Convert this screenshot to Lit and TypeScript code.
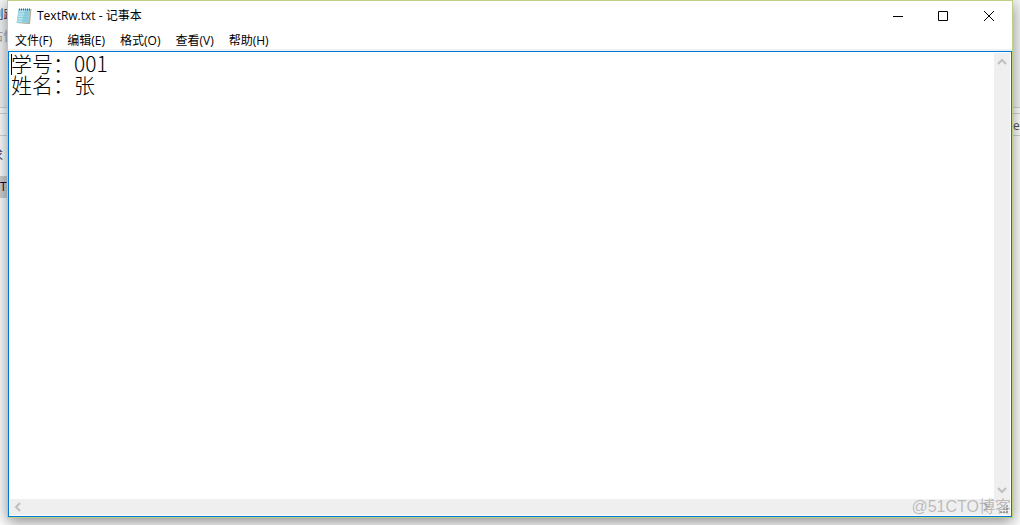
import { LitElement, html, css, svg } from "lit";
import { customElement, state } from "lit/decorators.js";

const chevrons: Record<string, string> = {
  up: "M2 8 6 4 10 8",
  down: "M2 4 6 8 10 4",
  left: "M8 2 4 6 8 10",
  right: "M4 2 8 6 4 10",
};

@customElement("scroll-bar")
class ScrollBar extends LitElement {
  static properties = { direction: {} };
  declare direction: string;

  static styles = css`
    :host { display: flex; background: #efefef; }
    .track { display: flex; flex: 1; justify-content: space-between; }
    .vertical { flex-direction: column; padding: 1px 0; }
    button {
      display: grid; place-items: center; width: 16px; height: 16px;
      padding: 0; border: 0; background: none;
    }
    svg { width: 12px; height: 12px; fill: none; stroke: #bfbfbf; stroke-width: 2; }
  `;

  private arrow(kind: string, label: string) {
    return html`<button type="button" aria-label=${label}>
      <svg viewBox="0 0 12 12">${svg`<path d=${chevrons[kind]}/>`}</svg>
    </button>`;
  }

  render() {
    return this.direction === "vertical"
      ? html`<div class="track vertical">${this.arrow("up", "向上滚动")}${this.arrow("down", "向下滚动")}</div>`
      : html`<div class="track">${this.arrow("left", "向左滚动")}${this.arrow("right", "向右滚动")}</div>`;
  }
}

@customElement("app-root")
class AppRoot extends LitElement {
  @state() private text = "学号：001\n姓名：张";

  private menus = ["文件(F)", "编辑(E)", "格式(O)", "查看(V)", "帮助(H)"];

  static styles = css`
    * { box-sizing: border-box; }
    :host {
      display: block;
      font: 12px/16px "Open Sans", "Noto Sans CJK SC", sans-serif;
      color: #000;
    }
    .desktop {
      position: relative;
      display: grid; grid-template-columns: 7px minmax(0, 1fr) 7px;
      height: 100vh; overflow: hidden; background: #fff;
    }
    .behind { display: flex; flex-direction: column; overflow: hidden; white-space: nowrap; }
    .ribbon { height: 108px; padding-top: 7px; background: #f3f5f7; border-bottom: 1px solid #d5d5d5; color: #335; }
    .ribbon div { height: 22px; display: flex; justify-content: center; }
    .ribbon .dim { color: #999; }
    .address { height: 23px; margin-top: 5px; padding-top: 4px; border: solid #d5d5d5; border-width: 1px 0; color: #555; }
    .row { height: 22px; padding-top: 3px; color: #446; }
    .heading { margin: 9px 0; display: flex; justify-content: flex-end; padding-right: 4px; }
    .selected { background: #d0d0d0; color: #204; }
    .window {
      position: relative; z-index: 1; display: flex; flex-direction: column;
      margin-bottom: 7px; border: 1px solid #bdd083; background: #fff;
      box-shadow: 0 4px 14px rgba(0, 0, 0, 0.45);
    }
    header { display: flex; align-items: center; height: 30px; padding-left: 8px; }
    .icon { width: 16px; height: 18px; margin-right: 5px; }
    h1 { flex: 1; margin: 0; font: inherit; }
    .control { display: grid; place-items: center; width: 46px; height: 30px; padding: 0; border: 0; background: none; }
    .control svg { width: 12px; height: 12px; fill: none; stroke: #000; }
    nav { display: flex; gap: 1px; height: 20px; border-bottom: 2px solid #f0f0f0; }
    nav button { padding: 2px 7px 0; border: 0; background: none; font: inherit; color: inherit; }
    .editor {
      position: relative; flex: 1; display: grid; min-height: 0;
      grid-template-columns: minmax(0, 1fr) 16px; grid-template-rows: minmax(0, 1fr) 16px;
      padding: 1px; border: 1px solid #0078d7;
    }
    textarea {
      display: block; width: 100%; height: 100%; padding: 0 1px; border: 0; outline: 0;
      resize: none; overflow: hidden; background: #fff; color: #000; white-space: pre;
      font: 300 21px/21px "Noto Sans CJK SC", sans-serif;
    }
    .caret { position: absolute; left: 2px; top: 2px; width: 1px; height: 21px; background: #000; }
    .corner { display: flex; align-items: flex-end; justify-content: flex-end; background: #efefef; }
    .corner svg { width: 12px; height: 12px; fill: #aaa; }
    .watermark {
      position: absolute; right: 9px; bottom: 8px; z-index: 2;
      font: 16px/20px "Liberation Sans", "Noto Sans CJK SC", sans-serif;
      color: rgba(120, 120, 120, 0.45);
    }
  `;

  render() {
    return html`
      <div class="desktop">
        <div class="behind" aria-hidden="true">
          <div class="ribbon"><div>创跟</div><div class="dim">占性</div></div>
          <div class="address"></div>
          <div class="row heading">求</div>
          <div class="row selected">Te</div>
        </div>
        <main class="window">
          <header>
            <svg class="icon" viewBox="0 0 16 18">
              <path d="M3 2H15.500L14 17H11L1 16Z" fill="#b9ad91"/>
              <path d="M2.500 2H14.500L12.500 16H.500Z" fill="#8fcfe0"/>
              <path d="M3 3H9L6 15H1.200Z" fill="#b4e3ee"/>
              <path d="M3 5.500H13M2.600 8H12.600M2.200 10.500H12.200M1.800 13H11.800" stroke="#74b9cc" stroke-width=".5"/>
              <path d="M3 2.500H15" stroke="#566" stroke-width="2" stroke-dasharray="1 1"/>
            </svg>
            <h1>TextRw.txt - 记事本</h1>
            <button class="control" aria-label="最小化"><svg viewBox="0 0 12 12"><path d="M2 6.500H12"/></svg></button>
            <button class="control" aria-label="最大化"><svg viewBox="0 0 12 12"><path d="M1.500 1.500H10.500V10.500H1.500Z"/></svg></button>
            <button class="control" aria-label="关闭"><svg viewBox="0 0 12 12"><path d="M1 1 11 11M11 1 1 11"/></svg></button>
          </header>
          <nav>${this.menus.map((m) => html`<button type="button">${m}</button>`)}</nav>
          <div class="editor">
            <textarea aria-label="文本" spellcheck="false" .value=${this.text}
              @input=${(e: Event) => (this.text = (e.target as HTMLTextAreaElement).value)}></textarea>
            <scroll-bar direction="vertical"></scroll-bar>
            <scroll-bar direction="horizontal"></scroll-bar>
            <div class="corner">
              <svg viewBox="0 0 12 12"><path d="M8 2h2v2H8zM5 5h2v2H5zM8 5h2v2H8zM2 8h2v2H2zM5 8h2v2H5zM8 8h2v2H8z"/></svg>
            </div>
            <span class="caret"></span>
          </div>
        </main>
        <div class="behind" aria-hidden="true">
          <div class="ribbon"></div>
          <div class="address">e</div>
        </div>
        <span class="watermark">@51CTO博客</span>
      </div>
    `;
  }
}
